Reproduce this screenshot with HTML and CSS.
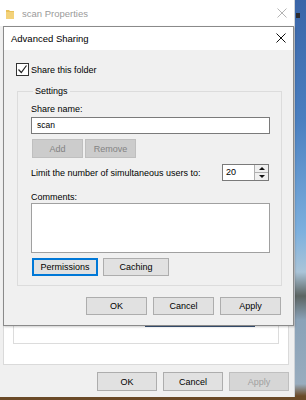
FILE: index.html
```html
<!DOCTYPE html>
<html lang="en">
<head>
  <meta charset="UTF-8">
  <title>Advanced Sharing</title>
  <link rel="stylesheet" href="styles.css">
</head>
<body>

<div class="desktop">
  <span class="desk-icon"></span>

  <!-- window behind -->
  <div class="win props">
    <div class="titlebar inactive">
      <svg class="folder" width="8" height="10" viewBox="0 0 8 10">
        <path d="M0 1h3l1 1h4v8H0z" fill="#e9c15a"/>
        <path d="M0 3h8v7H0z" fill="#f3d27a"/>
      </svg>
      <span class="title">scan Properties</span>
      <svg class="close" width="10" height="10" viewBox="0 0 10 10">
        <path d="M0.5 0.5l9 9M9.5 0.5l-9 9" stroke="#b4b4b4" stroke-width="1"/>
      </svg>
    </div>
    <div class="props-body">
      <div class="tab-page">
        <div class="group">
          <div class="strip"></div>
        </div>
      </div>
      <div class="btn-row outer-btns">
        <button class="btn">OK</button>
        <button class="btn">Cancel</button>
        <button class="btn" disabled>Apply</button>
      </div>
    </div>
  </div>

  <!-- dialog on top -->
  <div class="win dialog">
    <div class="titlebar">
      <span class="title">Advanced Sharing</span>
      <svg class="close" width="10" height="10" viewBox="0 0 10 10">
        <path d="M0.5 0.5l9 9M9.5 0.5l-9 9" stroke="#111" stroke-width="1"/>
      </svg>
    </div>
    <div class="dialog-body">
      <label class="check-row">
        <span class="checkbox">
          <svg width="11" height="11" viewBox="0 0 11 11">
            <path d="M1.5 5.5l2.8 3 5.2-7" fill="none" stroke="#222" stroke-width="1.2"/>
          </svg>
        </span>
        Share this folder
      </label>

      <fieldset class="settings">
        <legend>Settings</legend>
        <div class="lbl">Share name:</div>
        <div class="textbox">scan</div>
        <div class="small-btns">
          <button class="btn small" disabled>Add</button>
          <button class="btn small" disabled>Remove</button>
        </div>
        <div class="limit-row">
          <span>Limit the number of simultaneous users to:</span>
          <div class="spinner">
            <span class="spin-val">20</span>
            <div class="spin-btns">
              <span class="arrow up"></span>
              <span class="arrow down"></span>
            </div>
          </div>
        </div>
        <div class="lbl comments">Comments:</div>
        <div class="textarea"></div>
        <div class="small-btns perm-row">
          <button class="btn mid focused">Permissions</button>
          <button class="btn mid">Caching</button>
        </div>
      </fieldset>

      <div class="btn-row dialog-btns">
        <button class="btn">OK</button>
        <button class="btn">Cancel</button>
        <button class="btn">Apply</button>
      </div>
    </div>
  </div>
</div>

</body>
</html>
```

FILE: styles.css
```css
/* page + desktop */
body {
  margin: 0;
  font-family: 'Liberation Sans', Arial, sans-serif;
  font-size: 9px;
  color: #000;
}

.desktop {
  position: relative;
  width: 306px;
  height: 400px;
  overflow: hidden;
  background: linear-gradient(180deg, #3a65a8 0%, #4a7fc0 30%, #7db0de 58%, #aac4d8 68%, #5c6462 74%, #8aa2b8 80%, #98acbe 96%, #6b4a28 99%);
}

.desk-icon {
  position: absolute;
  left: 296px;
  top: 13px;
  width: 4px;
  height: 5px;
  background: #2a2a30;
}

/* windows */
.win {
  box-sizing: border-box;
  background: #f0f0f0;
}

.props {
  width: 295px;
  height: 397px;
  display: flex;
  flex-direction: column;
  border-right: 1px solid #cfd3d8;
}

.dialog {
  position: absolute;
  left: 3px;
  top: 26px;
  width: 291px;
  height: 300px;
  border: 1px solid #8a8a8a;
  box-shadow: 1px 1px 2px rgba(0, 0, 0, 0.2);
}

.titlebar {
  display: flex;
  align-items: center;
  background: #fff;
  font-size: 9.5px;
}

.props .titlebar {
  height: 26px;
  padding: 0 6px;
}

.dialog .titlebar {
  height: 23px;
  padding: 0 6px 0 7px;
}

.titlebar .title {
  flex: 1;
}

.titlebar.inactive .title {
  color: #9a9a9a;
  margin-left: 8px;
}

.folder {
  margin-top: 1px;
}

.props .close {
  margin-right: 1px;
}

.dialog .close {
  margin-right: 1px;
  margin-top: -2px;
}

/* window behind */
.props-body {
  flex: 1;
  display: flex;
  flex-direction: column;
  padding: 10px 5px 6px 3px;
}

.tab-page {
  flex: 1;
  display: flex;
  background: #fff;
  border: 1px solid #dadada;
  padding: 0 9px 20px 9px;
}

.group {
  flex: 1;
  display: flex;
  flex-direction: column;
  border: 1px solid #dcdcdc;
}

.strip {
  margin: auto 0 16px 131px;
  width: 110px;
  height: 2px;
  background: #3a5578;
}

.outer-btns {
  margin-top: 7px;
  gap: 6px;
}

.outer-btns .btn {
  width: 60px;
  height: 19px;
}

/* buttons */
.btn-row {
  display: flex;
  justify-content: flex-end;
}

.btn {
  box-sizing: border-box;
  font-family: inherit;
  font-size: 9px;
  color: #000;
  background: #e1e1e1;
  border: 1px solid #adadad;
  padding: 0;
  margin: 0;
}

.btn:disabled {
  background: #cccccc;
  border-color: #bfbfbf;
  color: #838383;
}

.props .btn:disabled {
  background: #d6d6d6;
  color: #a0a0a0;
}

.btn.focused {
  border: 2px solid #0078d7;
}

/* dialog content */
.dialog-body {
  padding: 13px 12px 0 12px;
}

.check-row {
  display: flex;
  align-items: center;
  gap: 2px;
  height: 13px;
}

.checkbox {
  box-sizing: border-box;
  width: 13px;
  height: 13px;
  border: 1px solid #333;
  background: #fff;
  display: flex;
  align-items: center;
  justify-content: center;
}

.settings {
  margin: 9px 0 0 1px;
  width: 265px;
  box-sizing: border-box;
  border: 1px solid #dcdcdc;
  padding: 6px 11px 9px 13px;
  min-width: 0;
}

.settings legend {
  padding: 0 2px;
  margin-left: 2px;
  line-height: 12px;
}

.lbl {
  line-height: 12px;
}

.textbox {
  box-sizing: border-box;
  margin-top: 2px;
  height: 17px;
  background: #fff;
  border: 1px solid #7a7a7a;
  padding: 0 5px;
  line-height: 15px;
  font-size: 8.5px;
}

.small-btns {
  display: flex;
  gap: 2px;
  margin-top: 5px;
  padding-left: 1px;
}

.btn.small {
  width: 51px;
  height: 19px;
}

.limit-row {
  display: flex;
  align-items: center;
  justify-content: space-between;
  margin-top: 6px;
  padding-right: 1px;
}

.spinner {
  box-sizing: border-box;
  width: 47px;
  height: 17px;
  display: flex;
  background: #fff;
  border: 1px solid #7a7a7a;
}

.spin-val {
  flex: 1;
  padding-left: 3px;
  line-height: 15px;
}

.spin-btns {
  width: 13px;
  display: flex;
  flex-direction: column;
  border-left: 1px solid #b0b0b0;
}

.arrow {
  flex: 1;
  display: flex;
  align-items: center;
  justify-content: center;
  background: #f0f0f0;
}

.arrow.up {
  border-bottom: 1px solid #b0b0b0;
}

.arrow::after {
  content: "";
  border-left: 3px solid transparent;
  border-right: 3px solid transparent;
}

.arrow.up::after {
  border-bottom: 3px solid #111;
}

.arrow.down::after {
  border-top: 3px solid #111;
}

.comments {
  margin-top: 10px;
}

.textarea {
  box-sizing: border-box;
  height: 50px;
  background: #fff;
  border: 1px solid #a0a0a0;
}

.perm-row {
  gap: 5px;
}

.btn.mid {
  width: 66px;
  height: 18px;
}

.dialog-btns {
  margin-top: 11px;
  gap: 6px;
}

.dialog-btns .btn {
  width: 61px;
  height: 18px;
}
```
